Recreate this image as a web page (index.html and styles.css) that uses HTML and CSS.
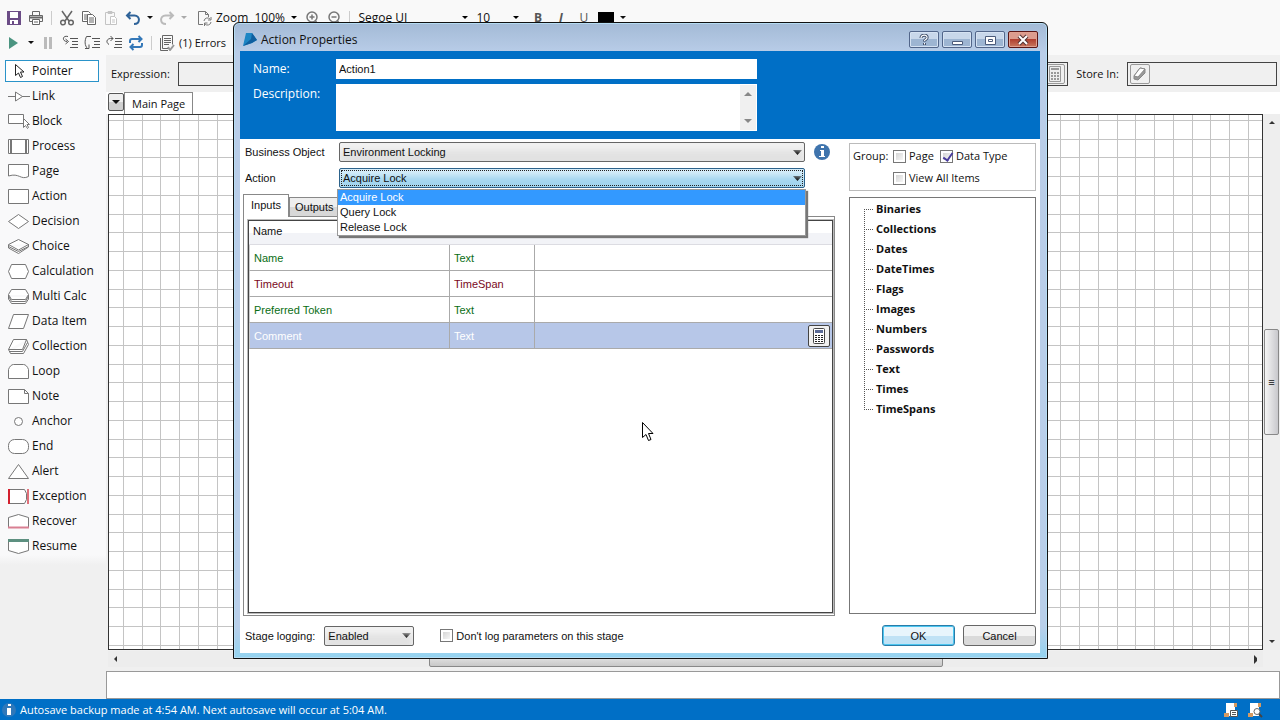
FILE: index.html
```
<!DOCTYPE html>
<html lang="en">
<head>
    <meta charset="UTF-8">
    <meta name="viewport" content="width=device-width, initial-scale=1.0">
    <title>Action Properties</title>
    <link rel="stylesheet" href="styles.css">
</head>
<body>
    <div class="app">
        <header class="toolbars">
            <div class="toolbar">
                <button class="tool" aria-label="Save"><svg width="16" height="16" viewBox="0 0 16 16"><path d="M1 1h14v14H1z" fill="#6b4c86"/><path d="M4 2h8v6H4z" fill="#fff"/><path d="M4 10h8v4H4z" fill="#fff"/><path d="M6 11h2v3H6z" fill="#6b4c86"/></svg></button>
                <button class="tool" aria-label="Print"><svg width="16" height="16" viewBox="0 0 16 16" fill="none" stroke="#666"><path d="M4.500 5V1.500h7V5M4 11.500H1.500v-6h13v6H12"/><path d="M2 7.500h12" stroke-width="2"/><path d="M4.500 9.500h7v5h-7zM6 12h4" fill="#fff"/></svg></button>
                <span class="sep"></span>
                <button class="tool" aria-label="Cut"><svg width="16" height="16" viewBox="0 0 16 16" fill="none" stroke="#666" stroke-width="1.500"><path d="M3 1l7 10M13 1L6 11"/><circle cx="4" cy="12.500" r="2.300"/><circle cx="12" cy="12.500" r="2.300"/></svg></button>
                <button class="tool" aria-label="Copy"><svg width="16" height="16" viewBox="0 0 16 16" fill="#fff" stroke="#666"><path d="M1.500 1.500h6l2 2v8h-8zM3 5h5M3 7h5M3 9h5"/><path d="M6.500 4.500h5l3 3v7h-8zM8 8h5M8 10h5M8 12h5"/></svg></button>
                <button class="tool" aria-label="Paste"><svg width="16" height="16" viewBox="0 0 16 16" fill="none" stroke="#c4c4c4"><path d="M2.500 2.500h9v12h-9z"/><path d="M5 1.500h4v2H5z" fill="#c4c4c4"/><path d="M7.500 6.500h4l2 2v6h-6zM9 10h3M9 12h3" fill="#fff"/></svg></button>
                <button class="tool" aria-label="Undo"><svg width="16" height="16" viewBox="0 0 16 16" fill="none" stroke="#2f6399" stroke-width="2"><path d="M5.500 2L2 5.500 5.500 9M2 5.500h7.500c6 0 6 8.500-.5 8.500"/></svg></button>
                <span class="arrow"></span>
                <button class="tool" aria-label="Redo"><svg width="16" height="16" viewBox="0 0 16 16" fill="none" stroke="#bbb" stroke-width="2"><path d="M10.500 2L14 5.500 10.500 9M14 5.500H6.500c-6 0-6 8.500.5 8.500"/></svg></button>
                <span class="arrow dim"></span>
                <button class="tool page" aria-label="Refresh page"><svg width="16" height="16" viewBox="0 0 16 16" fill="none" stroke="#777"><path d="M6 14.500H1.500v-13h7l3 3V7M8.500 1.500v3h3"/><path d="M7 11a3.500 3.500 0 0 1 6-2M14 7v3h-3M14 12a3.500 3.500 0 0 1-6 2M7.500 16v-3h3"/></svg></button>
                <label for="zoom">Zoom</label>
                <select id="zoom" class="flat zoom"><option>100%</option></select>
                <button class="tool" aria-label="Zoom in"><svg width="16" height="16" viewBox="0 0 16 16" fill="none" stroke="#777" stroke-width="1.500"><circle cx="8" cy="7" r="5"/><path d="M5.500 7h5M8 4.500v5M11.500 11l3 4"/></svg></button>
                <button class="tool" aria-label="Zoom out"><svg width="16" height="16" viewBox="0 0 16 16" fill="none" stroke="#777" stroke-width="1.500"><circle cx="8" cy="7" r="5"/><path d="M5.500 7h5M11.500 11l3 4"/></svg></button>
                <span class="sep"></span>
                <select class="flat family" aria-label="Font"><option>Segoe UI</option></select>
                <select class="flat size" aria-label="Font size"><option>10</option></select>
                <button class="tool letter"><b>B</b></button>
                <button class="tool letter"><b><i>I</i></b></button>
                <button class="tool letter">U</button>
                <button class="tool" aria-label="Text colour"><svg width="16" height="16" viewBox="0 0 16 16"><path d="M0 2h16v14H0z"/></svg></button>
                <span class="arrow"></span>
            </div>
            <div class="toolbar">
                <button class="tool" aria-label="Run"><svg width="16" height="16" viewBox="0 0 16 16"><path d="M3 2l9 6-9 6z" fill="#4b9480"/></svg></button>
                <span class="arrow"></span>
                <button class="tool" aria-label="Pause"><svg width="16" height="16" viewBox="0 0 16 16"><path d="M4 2h3v12H4zM9 2h3v12H9z" fill="#bbb"/></svg></button>
                <button class="tool" aria-label="Step in"><svg width="16" height="16" viewBox="0 0 16 16" fill="none" stroke="#555"><path d="M6 1.500C0 0 0 6.500 5 6.500M3.500 4l3 2.500-3 2.500M8 3.500h8M10 6.500h6M10 9.500h6M8 12.500h8"/></svg></button>
                <button class="tool" aria-label="Step over"><svg width="16" height="16" viewBox="0 0 16 16" fill="none" stroke="#555"><path d="M7 1.500H2.500c-2 4-2 9 1 12M1 13.500h4v-4M8 3.500h8M10 6.500h6M10 9.500h6M8 12.500h8"/></svg></button>
                <button class="tool" aria-label="Step out"><svg width="16" height="16" viewBox="0 0 16 16" fill="none" stroke="#555"><path d="M3 9.500C-1 7 1 2.500 7 3.500M4.500 1L7 3.500 4.500 6M9 3.500h7M9 6.500h7M9 9.500h7M8 12.500h8"/></svg></button>
                <button class="tool" aria-label="Reset"><svg width="16" height="16" viewBox="0 0 16 16" fill="none" stroke="#3478b8" stroke-width="2"><path d="M2 8V6c0-1 1-2 2-2h9M10.500 1l3 3-3 3M14 8v2c0 1-1 2-2 2H3M5.500 9l-3 3 3 3"/></svg></button>
                <span class="sep"></span>
                <button class="tool errors"><svg width="16" height="16" viewBox="0 0 16 16" fill="none" stroke="#666"><path d="M3.500.5h10v9M3.500.5v13H9M1.500 3v12.500H9M5 3.500h7M5 5.500h7M5 7.500h7M5 9.500h5"/><path d="M9 12l2 3 4-5" stroke="#999" stroke-width="2"/></svg>(1) Errors</button>
            </div>
        </header>

        <nav class="stages">
            <button class="stage selected"><svg width="22" height="16" viewBox="0 0 22 16"><path d="M7.500 1.500v11l3-2.500 2 4.500 2-1-2-4.500h3.500z" stroke="#222"/></svg>Pointer</button>
            <button class="stage"><svg width="22" height="16" viewBox="0 0 22 16"><path d="M0 8.500h7M14 8.500h8M7.500 4v9l7-4.500z"/></svg>Link</button>
            <button class="stage"><svg width="22" height="16" viewBox="0 0 22 16"><path d="M15 10.500H.5v-9h15V7"/><path d="M15.500 5.500v9l2-2 2 3 1-1-1.500-3h2.500z" fill="#fff"/></svg>Block</button>
            <button class="stage"><svg width="22" height="16" viewBox="0 0 22 16"><path d="M.5 1.500h20v14H.5z" fill="#fff"/><path d="M3 1.500v14M18 1.500v14" stroke-width="2"/></svg>Process</button>
            <button class="stage"><svg width="22" height="16" viewBox="0 0 22 16"><path d="M.5 1.500h20v12c-8 4-9-4-20-.5z"/></svg>Page</button>
            <button class="stage"><svg width="22" height="16" viewBox="0 0 22 16"><path d="M.5 1.500h20v14H.5z"/></svg>Action</button>
            <button class="stage"><svg width="22" height="16" viewBox="0 0 22 16"><path d="M.5 8.500l10-7 10 7-10 7z"/></svg>Decision</button>
            <button class="stage"><svg width="22" height="16" viewBox="0 0 22 16"><path d="M.5 7v3l10 5.500L20.500 9V6M.5 8.500l10 5 10-5M.5 6.500l10-5 10 5-10 5.500z"/></svg>Choice</button>
            <button class="stage"><svg width="22" height="16" viewBox="0 0 22 16"><path d="M3.500 1.500h14l3 7-3 7h-14l-3-7z"/></svg>Calculation</button>
            <button class="stage"><svg width="22" height="16" viewBox="0 0 22 16"><path d="M.5 7v4l3 4.500h14l3-4.500V7M1 9l2.500 4.500h14L20 9M3.500 1.500h14l3 5-3 5h-14l-3-5z"/></svg>Multi Calc</button>
            <button class="stage"><svg width="22" height="16" viewBox="0 0 22 16"><path d="M5.500 1.500h15l-5 14H.5z"/></svg>Data Item</button>
            <button class="stage"><svg width="22" height="16" viewBox="0 0 22 16"><path d="M.5 11.500l2 4h13l5-9-2-5M1.500 13.500h13l5-9M5.500 1.500h13l-4 10H.5z"/></svg>Collection</button>
            <button class="stage"><svg width="22" height="16" viewBox="0 0 22 16"><path d="M.5 15.500v-9c1-3 3-5 5-5h10c2 0 4 2 5 5v9z"/></svg>Loop</button>
            <button class="stage"><svg width="22" height="16" viewBox="0 0 22 16"><path d="M.5 1.500h16l4 4v10H.5zM16.500 1.500v4h4"/></svg>Note</button>
            <button class="stage"><svg width="22" height="16" viewBox="0 0 22 16"><circle cx="10.500" cy="8.500" r="4"/></svg>Anchor</button>
            <button class="stage"><svg width="22" height="16" viewBox="0 0 22 16"><rect x=".5" y="1.500" width="20" height="14" rx="6"/></svg>End</button>
            <button class="stage"><svg width="22" height="16" viewBox="0 0 22 16"><path d="M10.500 1.500l10 14H.5z"/></svg>Alert</button>
            <button class="stage"><svg width="22" height="16" viewBox="0 0 22 16"><path d="M.5 1.500h16l2 4v6l-2 4H.5z"/><path d="M1 1v15" stroke="#d3202e" stroke-width="2"/><path d="M20 1v15" stroke="#e0707a" stroke-width="2"/></svg>Exception</button>
            <button class="stage"><svg width="22" height="16" viewBox="0 0 22 16"><path d="M.5 15V4.500l10-3 10 3V15"/><path d="M0 14.500h21" stroke="#d97f92" stroke-width="2"/></svg>Recover</button>
            <button class="stage"><svg width="22" height="16" viewBox="0 0 22 16"><path d="M.5 2v10.500l10 3 10-3V2"/><path d="M0 2.500h21" stroke="#5d9080" stroke-width="3"/></svg>Resume</button>
        </nav>

        <main class="workspace">
            <div class="expression">
                <label for="expression">Expression:</label>
                <div class="well wide">
                    <input id="expression" type="text">
                    <button class="well-button" aria-label="Calculator"><svg width="14" height="16" viewBox="0 0 14 16"><path d="M1.500.5h11v15h-11z" fill="#eee" stroke="#999"/><path d="M3 2h8v2H3zM3 6h2v2H3zM6 6h2v2H6zM9 6h2v2H9zM3 9h2v2H3zM6 9h2v2H6zM9 9h2v2H9zM3 12h2v2H3zM6 12h2v2H6zM9 12h2v2H9z" fill="#999"/></svg></button>
                </div>
                <label for="store">Store In:</label>
                <div class="well">
                    <button class="well-button" aria-label="Data item"><svg width="14" height="16" viewBox="0 0 14 16" fill="#fff" stroke="#888"><path d="M1 10l6-8 5 1v4l-7 7-4-1z" fill="#999"/><path d="M1 10l6-8 5 1-7 8z"/></svg></button>
                    <input id="store" type="text">
                </div>
            </div>
            <div class="pages">
                <button class="page-menu" aria-label="Pages"><span class="arrow"></span></button>
                <button class="page-tab">Main Page</button>
            </div>
            <div class="canvas-row">
                <div class="canvas"></div>
                <div class="vscroll">
                    <span class="tri up"></span>
                    <span class="thumb">≡</span>
                    <span class="tri down"></span>
                </div>
            </div>
            <div class="hscroll">
                <span class="tri left"></span>
                <span class="thumb"></span>
                <span class="tri right"></span>
            </div>
            <div class="message"></div>
        </main>

        <footer class="status">
            <svg width="16" height="16" viewBox="0 0 16 16"><circle cx="8" cy="8" r="7" fill="#2f78ba"/><path d="M7 2h3v2H7zM6 6h4v7H6z" fill="#fff"/></svg>
            <span class="status-text">Autosave backup made at 4:54 AM. Next autosave will occur at 5:04 AM.</span>
            <svg width="16" height="16" viewBox="0 0 16 16"><path d="M3 1h9v13H1v-3h2z" fill="#fff"/><path d="M11 1h3v4h-3zM1 11h5v4H1z" fill="#d49a62"/><path d="M7.500 8.500h7v6h-7z" fill="#fff" stroke="#555"/><path d="M9 10.500h4M9 12.500h4" stroke="#555"/></svg>
            <svg width="16" height="16" viewBox="0 0 16 16"><path d="M3 1h9v13H1v-3h2z" fill="#fff"/><path d="M11 1h3v4h-3zM1 11h5v4H1z" fill="#d49a62"/><circle cx="10" cy="9.500" r="3" fill="#fff" stroke="#666"/><path d="M12 12l3 3" stroke="#444" stroke-width="2"/></svg>
        </footer>
    </div>

    <section class="dialog" role="dialog" aria-labelledby="dialog-title">
        <div class="titlebar">
            <svg width="16" height="16" viewBox="0 0 16 16"><path d="M4 1h6l5 7-5 3-9 3z" fill="#1d86c4"/><path d="M10 1l5 7-5 3-9 3 8-7z" fill="#0f5f9f"/></svg>
            <h1 id="dialog-title">Action Properties</h1>
            <button class="win" aria-label="Help"><svg width="12" height="12" viewBox="0 0 12 12" fill="none"><path d="M3 4c0-4 7-3.500 6 0-.5 1.500-2.500 1.500-2.500 3.500M6.500 9v2" stroke="#3b4a66" stroke-width="3"/><path d="M3 4c0-4 7-3.500 6 0-.5 1.500-2.500 1.500-2.500 3M6.500 9v1.500" stroke="#fff" stroke-width="1.200"/></svg></button>
            <button class="win" aria-label="Minimize"><svg width="12" height="12" viewBox="0 0 12 12"><path d="M1.500 7.500h10v3h-10z" fill="#fff" stroke="#4b5b7a"/></svg></button>
            <button class="win" aria-label="Maximize"><svg width="12" height="12" viewBox="0 0 12 12" fill="#fff" stroke="#4b5b7a"><path d="M1.500 2.500h10v8h-10zM4.500 5.500h4v2h-4z"/></svg></button>
            <button class="win close" aria-label="Close"><svg width="12" height="12" viewBox="0 0 12 12" fill="none"><path d="M2 2l8 8M10 2l-8 8" stroke="#533" stroke-width="4"/><path d="M2 2l8 8M10 2l-8 8" stroke="#fff" stroke-width="2"/></svg></button>
        </div>

        <div class="banner">
            <label for="name">Name:</label>
            <input id="name" type="text" value="Action1">
            <label for="description">Description:</label>
            <div class="memo">
                <textarea id="description"></textarea>
                <span class="memo-scroll"><span class="tri up"></span><span class="tri down"></span></span>
            </div>
        </div>

        <div class="body">
            <div class="left">
                <div class="field">
                    <label for="object">Business Object</label>
                    <select id="object" class="combo"><option>Environment Locking</option></select>
                    <svg class="info" width="18" height="18" viewBox="0 0 18 18"><circle cx="9" cy="9" r="8" fill="#3f74ad"/><path d="M8 3h3v2H8zM7 7h4v6h1v1H6v-1h2V8H7z" fill="#fff"/></svg>
                </div>
                <div class="field">
                    <label for="action">Action</label>
                    <div class="open">
                        <select id="action" class="combo focused"><option>Acquire Lock</option></select>
                        <ul class="options">
                            <li class="current">Acquire Lock</li>
                            <li>Query Lock</li>
                            <li>Release Lock</li>
                        </ul>
                    </div>
                </div>
                <div class="tabs">
                    <button class="tab active">Inputs</button>
                    <button class="tab">Outputs</button>
                </div>
                <div class="panel">
                    <div class="grid">
                        <table>
                            <thead>
                                <tr><th class="col-name">Name</th><th class="col-type">Data Type</th><th>Value</th></tr>
                            </thead>
                            <tbody>
                                <tr class="green"><td>Name</td><td>Text</td><td></td></tr>
                                <tr class="maroon"><td>Timeout</td><td>TimeSpan</td><td></td></tr>
                                <tr class="green"><td>Preferred Token</td><td>Text</td><td></td></tr>
                                <tr class="active-row"><td>Comment</td><td>Text</td><td><button class="calc" aria-label="Calculator"><svg width="14" height="18" viewBox="0 0 14 18"><rect x="1.500" y="1.500" width="11" height="15" rx="1" fill="#fff" stroke="#444"/><path d="M3 3h8v3H3z" fill="#5a6a96"/><path d="M3 8h2v1H3zM6 8h2v1H6zM9 8h2v1H9zM3 10h2v1H3zM6 10h2v1H6zM9 10h2v1H9zM3 12h2v1H3zM6 12h2v1H6zM9 12h2v1H9zM3 14h2v1H3zM6 14h2v1H6zM9 14h2v1H9z" fill="#222"/></svg></button></td></tr>
                            </tbody>
                        </table>
                    </div>
                </div>
            </div>

            <div class="right">
                <div class="group">
                    <span>Group:</span>
                    <label><input type="checkbox">Page</label>
                    <label><input type="checkbox" checked>Data Type</label>
                    <label class="second"><input type="checkbox">View All Items</label>
                </div>
                <ul class="tree">
                    <li>Binaries</li>
                    <li>Collections</li>
                    <li>Dates</li>
                    <li>DateTimes</li>
                    <li>Flags</li>
                    <li>Images</li>
                    <li>Numbers</li>
                    <li>Passwords</li>
                    <li>Text</li>
                    <li>Times</li>
                    <li>TimeSpans</li>
                </ul>
            </div>
        </div>

        <div class="actions">
            <label for="logging">Stage logging:</label>
            <select id="logging" class="combo short"><option>Enabled</option></select>
            <label class="check"><input type="checkbox">Don't log parameters on this stage</label>
            <button class="btn primary">OK</button>
            <button class="btn">Cancel</button>
        </div>
    </section>

    <svg class="cursor" width="14" height="22" viewBox="0 0 14 22"><path d="M1.500 1.500v15l3.500-3 2.500 6 2.500-1-2.500-6h4.500z" fill="#fff" stroke="#000"/></svg>
</body>
</html>
```
FILE: styles.css
```
* {
    margin: 0;
    padding: 0;
    box-sizing: border-box;
}

body {
    font-family: "Open Sans", "Noto Sans", sans-serif;
    font-size: 12px;
    line-height: 16px;
    color: #111;
    background: #f0f0f0;
    min-height: 100vh;
    overflow: hidden;
}

button, input, select, textarea {
    font: inherit;
    color: inherit;
    border: none;
    border-radius: 0;
    background: none;
    outline: none;
}

select, input[type="checkbox"] {
    appearance: none;
}

svg {
    display: block;
    flex: none;
}

ul {
    list-style: none;
}

.app {
    display: grid;
    grid-template-columns: 106px 1fr;
    grid-template-rows: auto 1fr auto;
    height: 100vh;
}

/* toolbars */
.toolbars {
    grid-column: 1 / -1;
    padding-top: 5px;
    background: #f9f9f9;
}

.toolbar {
    display: flex;
    align-items: center;
    height: 25px;
    padding-left: 3px;
}

.tool {
    display: flex;
    align-items: center;
    gap: 4px;
    padding: 0 3px;
    height: 22px;
}

.tool.page {
    margin-left: 4px;
}

.tool.letter {
    justify-content: center;
    width: 23px;
    color: #555;
}

.tool.errors {
    font-size: 11px;
}

.sep {
    width: 1px;
    height: 14px;
    margin: 0 4px;
    background: #ccc;
}

.arrow {
    width: 0;
    margin: 0 3px;
    border: 3px solid transparent;
    border-top-color: #111;
    border-bottom-width: 0;
}

.arrow.dim {
    border-top-color: #aaa;
}

.flat, .combo {
    background-image: url("data:image/svg+xml,%3Csvg xmlns='http://www.w3.org/2000/svg' width='9' height='5'%3E%3Cpath d='M0 0h9L4.500 5z'/%3E%3C/svg%3E");
    background-repeat: no-repeat;
    background-position: right 2px center;
}

.flat {
    background-size: 6px 3px;
    background-position: right 4px center;
    padding-left: 4px;
}

.zoom {
    width: 51px;
    margin-left: 2px;
}

.family {
    width: 118px;
}

.size {
    width: 51px;
    margin-right: 3px;
    padding-left: 4px;
}

/* stage list */
.stages {
    display: flex;
    flex-direction: column;
    gap: 3px;
    padding: 5px 7px 0 5px;
    background: linear-gradient(#f9f9fa 500px, #f0f0f0 510px);
}

.stage {
    display: flex;
    align-items: center;
    gap: 2px;
    height: 22px;
    padding-left: 2px;
    border: 1px solid transparent;
    white-space: nowrap;
}

.stage svg {
    fill: #fff;
    stroke: #777;
}

.stage.selected {
    border-color: #2a93c9;
    background: #fff;
}

/* workspace */
.workspace {
    display: flex;
    flex-direction: column;
    min-width: 0;
    font-size: 11px;
}

.expression {
    display: flex;
    align-items: center;
    height: 37px;
    padding: 0 3px 0 5px;
}

.well {
    display: flex;
    align-items: center;
    width: 150px;
    height: 24px;
    margin-left: 8px;
    padding: 2px;
    border: 1px solid #444;
}

.well.wide {
    flex: 1;
    width: auto;
    margin-right: 8px;
}

.well input {
    flex: 1;
    min-width: 0;
}

.well-button {
    padding: 1px 2px;
    border: 1px solid #999;
    border-radius: 2px;
}

.pages {
    display: flex;
    align-items: flex-end;
    height: 22px;
    padding-left: 2px;
    background: #fff;
}

.page-menu {
    width: 16px;
    height: 18px;
    margin-bottom: 3px;
    padding: 0 1px;
    border: 1px solid #555;
    border-radius: 2px;
    background: linear-gradient(#eee 50%, #d0d0d0 50%);
}

.page-menu .arrow {
    display: block;
    margin: 0 auto;
    border-width: 4px 4px 0;
}

.page-tab {
    height: 22px;
    padding: 0 7px;
    border: 1px solid #888;
    border-bottom: none;
    background: #fff;
}

.canvas-row {
    display: flex;
    flex: 1;
    margin-left: 2px;
}

/* three gaps of 19px and one of 18px per 75px tile */
.canvas {
    flex: 1;
    border: 1px solid #333;
    background-color: #fff;
    background-image:
        linear-gradient(90deg, #c4c4c4 1px, transparent 1px 19px, #c4c4c4 19px 20px, transparent 20px 37px, #c4c4c4 37px 38px, transparent 38px 56px, #c4c4c4 56px 57px, transparent 57px),
        linear-gradient(#c4c4c4 1px, transparent 1px 19px, #c4c4c4 19px 20px, transparent 20px 37px, #c4c4c4 37px 38px, transparent 38px 56px, #c4c4c4 56px 57px, transparent 57px);
    background-size: 75px 75px;
    background-position: 14px 5px;
}

.tri {
    width: 0;
    height: 0;
    border: 3px solid transparent;
}

.tri.up {
    border-top: none;
    border-bottom-color: #333;
}

.tri.down {
    border-bottom: none;
    border-top-color: #333;
}

.tri.left {
    border-left: none;
    border-right-color: #333;
}

.tri.right {
    border-right: none;
    border-left-color: #333;
}

.vscroll {
    display: flex;
    flex-direction: column;
    align-items: center;
    justify-content: space-between;
    width: 17px;
    padding: 7px 0;
    background: #eee;
}

.vscroll .thumb {
    width: 15px;
    height: 106px;
    border: 1px solid #888;
    border-radius: 2px;
    background: linear-gradient(90deg, #f5f5f5, #c8c8cc);
    line-height: 104px;
    text-align: center;
}

.hscroll {
    display: flex;
    align-items: center;
    justify-content: space-between;
    height: 16px;
    margin: 1px 17px 4px 2px;
    padding: 0 6px;
    background: #ededed;
}

.hscroll .thumb {
    width: 514px;
    height: 15px;
    border: 1px solid #888;
    border-radius: 2px;
    background: linear-gradient(#eee, #c8c8c8);
}

.message {
    height: 28px;
    border: 1px solid #999;
    background: #fff;
}

/* status bar */
.status {
    grid-column: 1 / -1;
    display: flex;
    align-items: center;
    gap: 8px;
    height: 21px;
    padding: 0 17px 0 1px;
    background: #006fc6;
    color: #fff;
    font-size: 11px;
}

.status-text {
    flex: 1;
    margin-left: -5px;
}

/* dialog */
.dialog {
    position: absolute;
    inset: 22px 232px 61px 233px;
    display: flex;
    flex-direction: column;
    padding: 0 7px 5px 6px;
    border: 1px solid #111;
    border-radius: 6px 6px 0 0;
    background: linear-gradient(#a3bad6, #b9cde8 30px, #b9cfea 95%, #93d3f0);
    box-shadow: inset 0 0 0 1px #b5dcf3;
}

.titlebar {
    display: flex;
    align-items: center;
    gap: 3px;
    height: 28px;
    padding: 5px 2px 0;
}

.titlebar h1 {
    flex: 1;
    font-size: 12px;
    font-weight: normal;
}

.win {
    display: flex;
    align-items: center;
    justify-content: center;
    width: 30px;
    height: 17px;
    border: 1px solid #52668a;
    border-radius: 2px;
    background: linear-gradient(#c8d7ea 50%, #9db5d2 50%);
    box-shadow: inset 0 0 0 1px #d5e2f2;
}

.win.close {
    border-color: #5a1616;
    background: linear-gradient(#dc9c8e 50%, #b04030 50%, #c87860);
    box-shadow: inset 0 0 0 1px #e0a090;
}

.banner {
    display: grid;
    grid-template-columns: 83px 421px;
    gap: 5px 0;
    align-content: start;
    height: 88px;
    padding: 8px 0 0 13px;
    background: #006fc6;
    color: #fff;
}

.banner label {
    padding-top: 2px;
}

.banner input {
    height: 20px;
    padding: 0 3px;
    background: #fff;
    color: #111;
}

.memo {
    display: flex;
    height: 47px;
    padding: 1px;
    background: #fff;
    color: #111;
}

.memo textarea {
    flex: 1;
    resize: none;
}

.memo-scroll {
    display: flex;
    flex-direction: column;
    align-items: center;
    justify-content: space-between;
    width: 16px;
    padding: 7px 0;
    background: #f0f0f0;
}

.memo-scroll .tri {
    border-left-width: 4px;
    border-right-width: 4px;
}

.memo-scroll .up {
    border-bottom: 4px solid #888;
}

.memo-scroll .down {
    border-top: 4px solid #888;
}

.body {
    flex: 1;
    display: grid;
    grid-template-columns: 1fr 187px;
    gap: 14px;
    padding: 3px 4px 0 3px;
    background: #fff;
    font-size: 11px;
}

.left, .actions, .banner input {
    font-family: "Liberation Sans", Arial, sans-serif;
    font-size: 11px;
}

.left {
    display: flex;
    flex-direction: column;
}

.field {
    display: grid;
    grid-template-columns: 94px 1fr 30px;
    align-items: center;
    height: 20px;
    margin-bottom: 6px;
    padding-left: 2px;
}

.info {
    margin-left: 8px;
}

.combo {
    display: block;
    width: 100%;
    height: 20px;
    padding: 0 3px;
    border: 1px solid #666;
    border-radius: 2px;
    background-color: #e2e2e2;
    box-shadow: inset 0 7px 6px #f2f2f2;
}

.combo.focused {
    border-color: #2c628b;
    background-color: #a3d5ef;
    box-shadow: inset 0 7px 6px #d8eefa;
    outline: 1px dotted #222;
    outline-offset: -3px;
}

.open {
    position: relative;
}

.options {
    position: absolute;
    z-index: 1;
    top: 21px;
    left: -2px;
    right: -1px;
    border: 1px solid #999;
    background: #fff;
    box-shadow: 2px 2px 1px #777;
}

.options li {
    padding-left: 2px;
    line-height: 15px;
}

.options .current {
    background: #3399ff;
    color: #fff;
}

.tabs {
    display: flex;
    align-items: flex-end;
}

.tab {
    height: 19px;
    padding: 0 5px;
    border: 1px solid #888;
    border-bottom: none;
    background: linear-gradient(#eee 50%, #d8d8d8 50%);
}

.tab.active {
    height: 23px;
    margin-bottom: -1px;
    padding: 0 7px 3px;
    background: #fff;
    z-index: 0;
}

.panel {
    flex: 1;
    display: flex;
    padding: 3px 1px 2px 4px;
    border: 1px solid #888;
}

.grid {
    flex: 1;
    border: 1px solid #444;
    box-shadow: 0 0 0 1px #bbb;
}

table {
    width: 100%;
    border-collapse: separate;
    border-spacing: 0;
}

th {
    height: 24px;
    padding: 0 4px 3px;
    border-bottom: 1px solid #dcdce2;
    background: linear-gradient(#fff 50%, #f2f3f7 50%);
    font-weight: normal;
    text-align: left;
}

.col-name {
    width: 201px;
}

.col-type {
    width: 85px;
}

td {
    height: 26px;
    padding: 0 4px;
    border-right: 1px solid #aaa;
    border-bottom: 1px solid #aaa;
}

td:first-child {
    border-left: 1px solid #ccc;
}

td:last-child {
    border-right: none;
    padding: 0 2px;
}

.green {
    color: #0a6e14;
}

.maroon {
    color: #7a0a1c;
}

.active-row {
    background: #b7c7e8;
    color: #fff;
}

.calc {
    display: flex;
    align-items: center;
    justify-content: center;
    width: 22px;
    height: 22px;
    margin-left: auto;
    border: 1px solid #444;
    border-radius: 2px;
    background: #f0f0f0;
}

/* data item explorer */
.right {
    display: flex;
    flex-direction: column;
    gap: 6px;
    padding: 1px 0 2px;
}

.group {
    display: grid;
    grid-template-columns: 40px 47px 1fr;
    align-items: center;
    height: 48px;
    padding: 1px 3px;
    border: 1px solid #bbb;
}

.group label, .check {
    display: flex;
    align-items: center;
    gap: 3px;
    white-space: nowrap;
}

.group .second {
    grid-column: 2 / -1;
}

input[type="checkbox"] {
    flex: none;
    width: 13px;
    height: 13px;
    border: 1px solid #777;
    background: linear-gradient(135deg, #ccc, #fff);
    box-shadow: inset 0 0 0 2px #fff;
}

input[type="checkbox"]:checked::before {
    content: "";
    display: block;
    width: 4px;
    height: 8px;
    margin: 0 0 0 4px;
    border: solid #4a3c9c;
    border-width: 0 2px 2px 0;
    transform: rotate(35deg);
}

.tree {
    flex: 1;
    padding: 1px 0 0 14px;
    border: 1px solid #777;
    font-weight: bold;
}

.tree li {
    display: flex;
    align-items: center;
    gap: 3px;
    height: 20px;
    background: linear-gradient(90deg, transparent 1px, #fff 1px), repeating-linear-gradient(#555 0 1px, #fff 1px 2px);
}

.tree li:first-child {
    background-position: 0 10px;
    background-repeat: no-repeat;
}

.tree li:last-child {
    background-size: 100% 10px;
    background-repeat: no-repeat;
}

.tree li::before {
    content: "";
    width: 9px;
    border-top: 1px dotted #555;
}

/* footer of the dialog */
.actions {
    display: flex;
    align-items: center;
    height: 37px;
    padding: 2px 4px 0 5px;
    background: #fff;
}

.combo.short {
    width: 90px;
    margin: 0 26px 0 9px;
}

.check {
    flex: 1;
}

.btn {
    width: 73px;
    height: 21px;
    margin-left: 8px;
    border: 1px solid #666;
    border-radius: 3px;
    background: linear-gradient(#f3f3f3 50%, #dadada 50%);
}

.btn.primary {
    border-color: #2a7ca8;
    background: linear-gradient(#e8f5fc 50%, #c0e2f5 50%);
    box-shadow: inset 0 0 0 1px #4cc6f0;
}

.cursor {
    position: absolute;
    top: 421px;
    left: 641px;
    z-index: 2;
}
```
